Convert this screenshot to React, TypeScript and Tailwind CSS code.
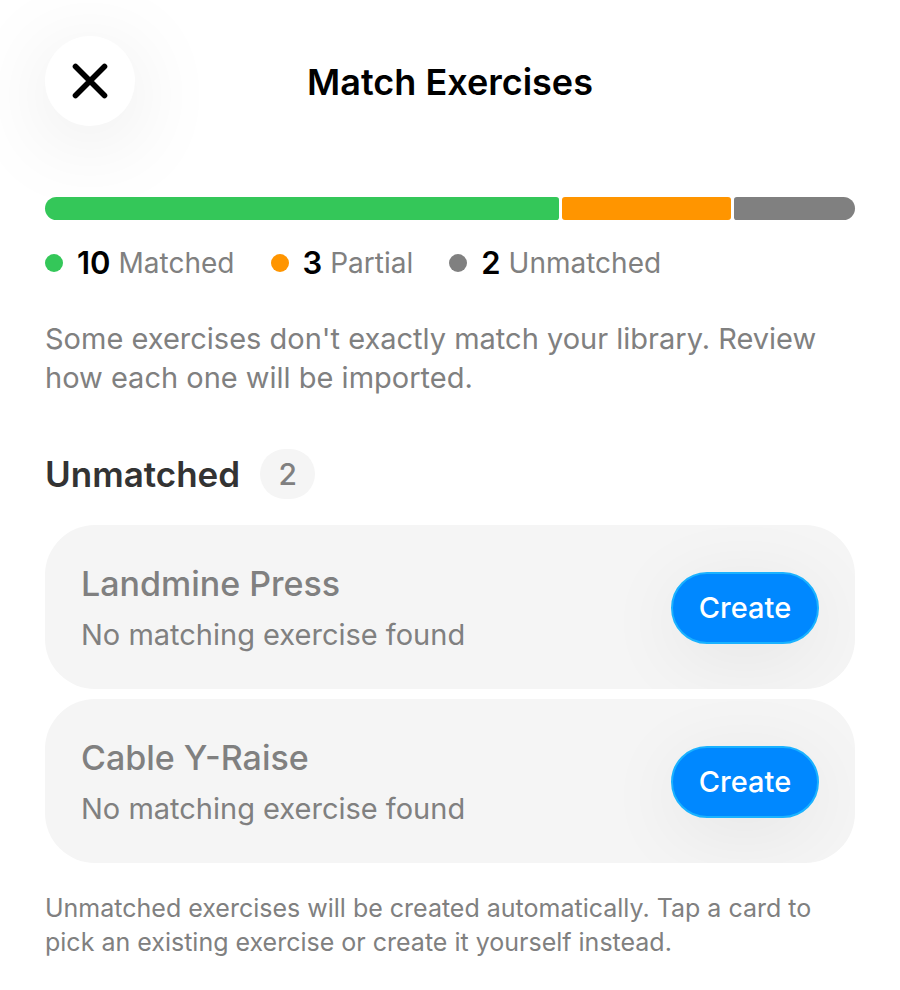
const SEGMENTS = [
  { label: 'Matched', count: 10, bar: 'bg-[#34c759] rounded-l-[12px] rounded-r-[3px]', dot: 'bg-[#34c759]', width: 513 },
  { label: 'Partial', count: 3, bar: 'bg-[#ff9500] rounded-[3px]', dot: 'bg-[#ff9500]', width: 169 },
  { label: 'Unmatched', count: 2, bar: 'bg-[#808080] rounded-l-[3px] rounded-r-[12px]', dot: 'bg-[#808080]', width: 121 },
]

const UNMATCHED = ['Landmine Press', 'Cable Y-Raise']

function ExerciseCard({ name }: { name: string }) {
  return (
    <li className="flex items-center justify-between overflow-hidden rounded-[50px] bg-[#f5f5f5] px-9 pt-[34px] pb-8">
      <div className="text-[#808080]">
        <h3 className="text-[34px] leading-[50px] font-medium">{name}</h3>
        <p className="mt-1 text-[29px] leading-[44px]">No matching exercise found</p>
      </div>
      <button className="h-[72px] w-[148px] rounded-full border-2 border-[#1ab2ff] bg-[#0088ff] text-[29px] font-medium text-white shadow-[0_14px_80px_rgba(0,0,0,0.07)]">
        Create
      </button>
    </li>
  )
}

export default function App() {
  return (
    <div className="min-h-screen bg-white px-[45px] pt-9 pb-7 font-['Inter',sans-serif] text-black">
      <header className="grid grid-cols-[90px_1fr_90px] items-center">
        <button
          aria-label="Close"
          className="flex size-[90px] items-center justify-center rounded-full bg-white shadow-[0_14px_90px_rgba(0,0,0,0.10)]"
        >
          <svg viewBox="0 0 36 36" className="size-9" fill="none" stroke="currentColor" strokeWidth="5.6" strokeLinecap="round">
            <path d="M3.5 3.5l29 29M32.5 3.5l-29 29" />
          </svg>
        </button>
        <h1 className="pt-[2px] text-center text-[36px] leading-[48px] font-semibold">Match Exercises</h1>
      </header>

      <div className="mt-[71px] flex h-[23px] gap-[3px]">
        {SEGMENTS.map((s) => (
          <div key={s.label} className={s.bar} style={{ flexGrow: s.width, flexBasis: 0 }} />
        ))}
      </div>
      <ul className="mt-5 flex gap-9 text-[28px] leading-[46px]">
        {SEGMENTS.map((s) => (
          <li key={s.label} className="flex items-center">
            <span className={`mr-[14px] size-[18px] rounded-full ${s.dot}`} />
            <span className="mr-2 text-[31px] font-semibold">{s.count}</span>
            <span className="text-[#808080]">{s.label}</span>
          </li>
        ))}
      </ul>

      <p className="mt-[33px] text-[29px] leading-[39px] text-[#808080]">
        Some exercises don't exactly match your library. Review how each one will be imported.
      </p>

      <section className="mt-[52px]">
        <div className="flex items-center gap-5">
          <h2 className="text-[35px] leading-[50px] font-semibold text-[#333]">Unmatched</h2>
          <span className="flex h-[50px] w-[55px] items-center justify-center rounded-full bg-[#f5f5f5] text-[30px] font-medium text-[#808080]">
            {UNMATCHED.length}
          </span>
        </div>
        <ul className="mt-[26px] flex flex-col gap-[10px]">
          {UNMATCHED.map((name) => (
            <ExerciseCard key={name} name={name} />
          ))}
        </ul>
        <p className="mt-7 text-[25px] leading-[34px] text-[#808080]">
          Unmatched exercises will be created automatically. Tap a card to pick an existing exercise or create it yourself instead.
        </p>
      </section>
    </div>
  )
}
